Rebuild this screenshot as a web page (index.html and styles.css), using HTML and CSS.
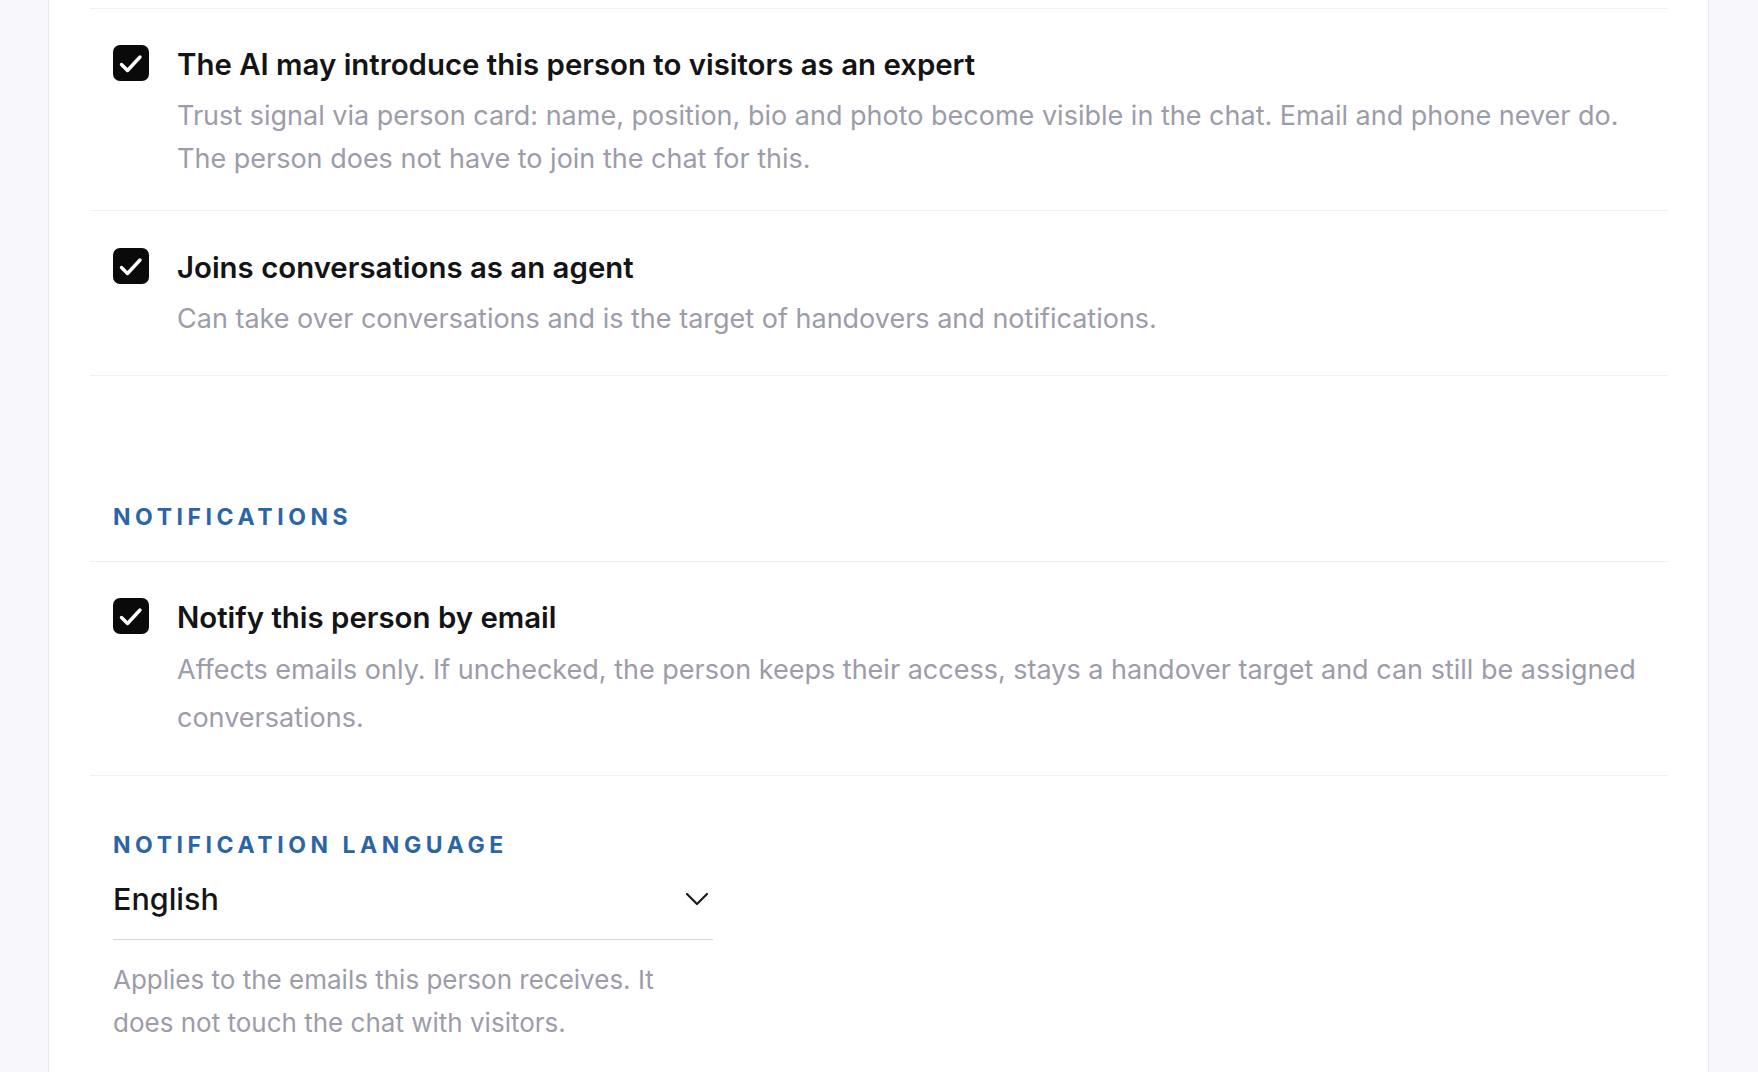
FILE: index.html
```html
<!DOCTYPE html>
<html lang="en">
<head>
<meta charset="utf-8">
<title>Person settings</title>
<link rel="stylesheet" href="styles.css">
</head>
<body>
<div class="page">
  <main class="card">
    <div class="top-stub"></div>

    <div class="option option-tight option-first">
      <span class="checkbox"><svg viewBox="0 0 36 36" width="36" height="36"><path d="M8.5 19.5 L14.5 25.5 L27 12" fill="none" stroke="#fff" stroke-width="3.4" stroke-linecap="round" stroke-linejoin="round"/></svg></span>
      <div class="option-text">
        <div class="option-title">The AI may introduce this person to visitors as an expert</div>
        <div class="option-desc">Trust signal via person card: name, position, bio and photo become visible in the chat. Email and phone never do. The person does not have to join the chat for this.</div>
      </div>
    </div>

    <div class="option option-tight">
      <span class="checkbox"><svg viewBox="0 0 36 36" width="36" height="36"><path d="M8.5 19.5 L14.5 25.5 L27 12" fill="none" stroke="#fff" stroke-width="3.4" stroke-linecap="round" stroke-linejoin="round"/></svg></span>
      <div class="option-text">
        <div class="option-title">Joins conversations as an agent</div>
        <div class="option-desc">Can take over conversations and is the target of handovers and notifications.</div>
      </div>
    </div>

    <div class="section-head">
      <div class="section-label">Notifications</div>
    </div>

    <div class="option option-loose">
      <span class="checkbox"><svg viewBox="0 0 36 36" width="36" height="36"><path d="M8.5 19.5 L14.5 25.5 L27 12" fill="none" stroke="#fff" stroke-width="3.4" stroke-linecap="round" stroke-linejoin="round"/></svg></span>
      <div class="option-text">
        <div class="option-title">Notify this person by email</div>
        <div class="option-desc">Affects emails only. If unchecked, the person keeps their access, stays a handover target and can still be assigned conversations.</div>
      </div>
    </div>

    <div class="field">
      <div class="section-label">Notification language</div>
      <div class="select">
        <span class="select-value">English</span>
        <svg class="chevron" viewBox="0 0 24 14" width="24" height="14"><path d="M2 2 L12 12 L22 2" fill="none" stroke="#1a1a1a" stroke-width="2.2" stroke-linecap="round" stroke-linejoin="round"/></svg>
      </div>
      <div class="field-help">Applies to the emails this person receives. It does not touch the chat with visitors.</div>
    </div>
  </main>
</div>
</body>
</html>
```

FILE: styles.css
```css
* { box-sizing: border-box; }

html, body {
  margin: 0;
  padding: 0;
}

body {
  background: #f8f8fc;
  font-family: "Inter", "Noto Sans", "Liberation Sans", sans-serif;
  color: #151518;
  overflow: hidden;
}

.page {
  display: flex;
  min-height: 100vh;
}

.card {
  margin-left: 48px;
  width: 1661px;
  min-height: 1200px;
  background: #ffffff;
  border-left: 1px solid #e9e9f1;
  border-right: 1px solid #e9e9f1;
  padding: 0 40px 0 41px;
}

.top-stub {
  height: 9px;
  border-bottom: 1px solid #f0f0f3;
}

.option {
  display: flex;
  align-items: flex-start;
  gap: 28px;
  padding: 37px 22px 34px 23px;
  border-bottom: 1px solid #f0f0f3;
}

.option-first {
  padding-top: 36px;
  padding-bottom: 30px;
}

.checkbox {
  flex: 0 0 36px;
  width: 36px;
  height: 36px;
  border-radius: 7px;
  background: #0a0a0a;
  display: flex;
}

.option-text {
  flex: 1;
  min-width: 0;
}

.option-title {
  font-size: 29.4px;
  line-height: 40px;
  font-weight: 600;
  color: #141416;
}

.option-desc {
  font-size: 27px;
  color: #9c9caa;
}

.option-tight .option-desc {
  line-height: 42.7px;
  margin-top: 10px;
}

.option-loose {
  padding-top: 36px;
  padding-bottom: 33px;
}

.option-loose .option-desc {
  line-height: 47.7px;
  margin-top: 8px;
}

.section-head {
  padding: 127px 23px 30px;
  border-bottom: 1px solid #f0f0f3;
}

.section-label {
  font-size: 23px;
  line-height: 28px;
  font-weight: 700;
  letter-spacing: 0.198em;
  text-transform: uppercase;
  color: #2c65a6;
}

.field {
  padding: 55px 23px 40px;
}

.select {
  width: 600px;
  margin-top: 20px;
  padding: 0 4px 20px 0;
  border-bottom: 1px solid #d6d6da;
  display: flex;
  align-items: center;
  justify-content: space-between;
}

.select-value {
  font-size: 30.5px;
  line-height: 40px;
  font-weight: 500;
  color: #151518;
}

.chevron {
  display: block;
}

.field-help {
  width: 585px;
  margin-top: 18px;
  font-size: 26px;
  line-height: 43px;
  color: #9c9caa;
}
```
